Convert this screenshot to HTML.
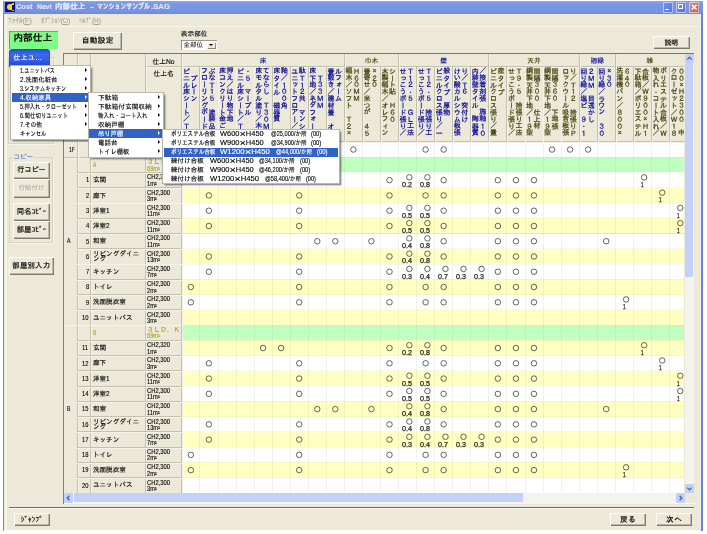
<!DOCTYPE html>
<html lang="ja">
<head>
<meta charset="utf-8">
<title>Cost Navi 内部仕上 - マンションサンプル.SAG</title>
<style>
html,body{margin:0;padding:0;background:#fff;}
body{width:707px;height:534px;overflow:hidden;position:relative;font-family:"Liberation Sans", "IPAGothic", sans-serif;}
#win{position:absolute;left:0;top:0;width:707px;height:534px;overflow:hidden;will-change:transform;}
#win div{position:absolute;box-sizing:border-box;}
.t{white-space:nowrap;-webkit-text-stroke:0.12px currentColor;}
.bl{left:0;top:0;width:100%;text-align:center;white-space:nowrap;-webkit-text-stroke:0.18px currentColor;}
.mi{white-space:nowrap;line-height:8px;}
.mi .p{font-size:6.0px;letter-spacing:-0.1px;}
.vt{-webkit-text-stroke:0.2px currentColor;writing-mode:vertical-lr;text-orientation:upright;font-size:7.0px;line-height:7.5px;letter-spacing:-0.14px;white-space:nowrap;overflow:hidden;font-family:"Liberation Sans","IPAGothic",sans-serif;}
.o{border:0.72px solid #45453f;border-radius:50%;}
.v{width:18px;text-align:center;font-size:5.6px;font-weight:bold;line-height:6px;color:#333;letter-spacing:0.1px;white-space:nowrap;}
.x{font-size:1.45em;line-height:0;position:relative;top:0.06em;}
.m{font-family:"Liberation Mono","IPAGothic",monospace;}
</style>
</head>
<body>
<div id="win">
<div style="left:3.00px;top:0.80px;width:699.90px;height:13.50px;background:linear-gradient(180deg,#8aa5ea 0%,#7a96e2 25%,#7892e0 80%,#6f88d8 100%);"></div>
<div style="left:5.20px;top:2.40px;width:9.40px;height:9.60px;background:#10108c;"></div>
<div style="left:7.00px;top:4.20px;width:4.60px;height:5.60px;background:#f0e020;border-radius:3px 0 0 3px;"></div>
<div style="left:12.00px;top:3.00px;width:2.00px;height:2.00px;background:#d8c820;"></div>
<div style="left:11.60px;top:9.60px;width:2.20px;height:1.80px;background:#d8c820;"></div>
<div style="left:0;top:0;width:0;height:0"><div class="t" style="left:16.40px;top:3.40px;font-size:7.6px;font-weight:bold;color:#dfe7fc;line-height:8px;transform:scaleX(0.9770);transform-origin:0 0;">Cost</div> <div class="t" style="left:37.40px;top:3.40px;font-size:7.6px;font-weight:bold;color:#dfe7fc;line-height:8px;transform:scaleX(0.9095);transform-origin:0 0;">Navi</div> <div class="t" style="left:55.20px;top:3.40px;font-size:7.6px;font-weight:bold;color:#dfe7fc;line-height:8px;transform:scaleX(1.0033);transform-origin:0 0;">内部仕上</div> <div class="t" style="left:89.60px;top:3.40px;font-size:7.6px;font-weight:bold;color:#dfe7fc;line-height:8px;transform:scaleX(1.5015);transform-origin:0 0;">-</div> <div class="t" style="left:97.00px;top:3.40px;font-size:7.6px;font-weight:bold;color:#dfe7fc;line-height:8px;transform:scaleX(0.7719);transform-origin:0 0;">マンションサンプル</div><div class="t" style="left:151.20px;top:3.40px;font-size:7.6px;font-weight:bold;color:#dfe7fc;line-height:8px;transform:scaleX(1.0226);transform-origin:0 0;">.SAG</div></div>
<div style="left:663.00px;top:2.20px;width:10.40px;height:10.40px;background:linear-gradient(135deg,#7896f0,#4f70dc);border-radius:1.5px;box-shadow:inset 0 0 0 0.7px rgba(255,255,255,.75);"><div style="left:2.4px;top:6.6px;width:3.6px;height:1.6px;background:#fff"></div></div>
<div style="left:676.00px;top:2.20px;width:10.40px;height:10.40px;background:linear-gradient(135deg,#7896f0,#4f70dc);border-radius:1.5px;box-shadow:inset 0 0 0 0.7px rgba(255,255,255,.75);"><div style="left:2.3px;top:2.3px;width:4.4px;height:4.4px;border:0.8px solid #fff;border-top-width:1.6px"></div></div>
<div style="left:688.60px;top:2.20px;width:10.40px;height:10.40px;background:linear-gradient(135deg,#cc8e8c,#b86062);border-radius:1.5px;box-shadow:inset 0 0 0 0.7px rgba(255,255,255,.75);"><svg style="position:absolute;left:0;top:0" width="10.4" height="10.4" viewBox="0 0 10.4 10.4"><path d="M2.8 2.8 L7.6 7.6 M7.6 2.8 L2.8 7.6" stroke="#fff" stroke-width="1.5" fill="none"/></svg></div>
<div style="left:3.00px;top:14.00px;width:1.40px;height:516.50px;background:#6f86e4;"></div>
<div style="left:701.30px;top:14.00px;width:1.60px;height:516.50px;background:#6880e6;"></div>
<div style="left:699.60px;top:14.00px;width:1.70px;height:516.50px;background:#f2f1e6;"></div>
<div style="left:4.40px;top:14.30px;width:695.20px;height:516.20px;background:#ece9d8;"></div>
<div style="left:4.60px;top:14.60px;width:2.40px;height:515.90px;background:#f4f3ea;"></div>
<div style="left:4.60px;top:25.90px;width:694.80px;height:0.80px;background:#f6f5ec;"></div>
<div class="t" style="left:7.80px;top:16.80px;font-size:7.0px;color:#a9a594;line-height:8px;transform:scaleX(1.0376);transform-origin:0 0;">ﾌｧｲﾙ(<u>F</u>)</div>
<div class="t" style="left:40.50px;top:16.80px;font-size:7.0px;color:#a9a594;line-height:8px;transform:scaleX(0.9419);transform-origin:0 0;">ｵﾌﾟｼｮﾝ(<u>O</u>)</div>
<div class="t" style="left:78.70px;top:16.80px;font-size:7.0px;color:#a9a594;line-height:8px;transform:scaleX(0.9234);transform-origin:0 0;">ﾍﾙﾌﾟ(<u>H</u>)</div>
<div style="left:9.20px;top:31.20px;width:49.20px;height:17.40px;background:#7cfc82;box-shadow:inset 0.8px 0.8px 0 #6f8a5c;"><div style="left:4.2px;top:0.6px;font-size:9.7px;font-weight:bold;line-height:11px;color:#000;white-space:nowrap">内部仕上</div></div>
<div style="left:73.00px;top:31.60px;width:49.40px;height:18.00px;background:#ece9d8;box-shadow:inset 0.9px 0.9px 0 #fffffa,inset -0.9px -0.9px 0 #7c7a6c,inset -1.7px -1.7px 0 #aca899;"><div class="bl" style="font-size:7.7px;color:#000;letter-spacing:0.3px;line-height:18.00px;">自動設定</div></div>
<div style="left:653.00px;top:35.60px;width:36.60px;height:13.60px;background:#ece9d8;box-shadow:inset 0.9px 0.9px 0 #fffffa,inset -0.9px -0.9px 0 #7c7a6c,inset -1.7px -1.7px 0 #aca899;"><div class="bl" style="font-size:6.8px;color:#000;letter-spacing:0.0px;line-height:13.60px;">説明</div></div>
<div class="t" style="left:180.80px;top:29.90px;font-size:6.7px;line-height:8px;color:#000;">表示部位</div>
<div style="left:180.80px;top:40.40px;width:35.80px;height:9.90px;background:#fff;box-shadow:inset 0.8px 0.8px 0 #7c7a6c,inset -0.7px -0.7px 0 #f8f7f0;"><div style="left:2.6px;top:1.0px;font-size:6.6px;line-height:8px;white-space:nowrap">全部位</div><div style="left:26.4px;top:1.2px;width:8.4px;height:7.6px;background:#ece9d8;box-shadow:inset 0.7px 0.7px 0 #fff,inset -0.7px -0.7px 0 #6c6a5c"><div style="left:2.2px;top:2.8px;width:0;height:0;border-left:2px solid transparent;border-right:2px solid transparent;border-top:2.4px solid #000"></div></div></div>
<div style="left:8.40px;top:56.50px;width:46.00px;height:87.00px;box-shadow:inset 0 0 0 0.8px #cfccba, 0.8px 0.8px 0 #faf9f2;"></div>
<div style="left:8.60px;top:48.60px;width:41.20px;height:18.60px;background:linear-gradient(180deg,#2650da 0%,#3a68f0 30%,#3560e8 60%,#2040c8 100%);border-radius:4px 4px 0 0;box-shadow:inset 0 0 0 0.6px #2846c0;"><div style="left:5.0px;top:5.8px;font-size:6.9px;font-weight:bold;color:#fff;line-height:8px;white-space:nowrap;letter-spacing:0.35px;text-shadow:0.4px 0.4px 0 #1a2f90">仕上ユ…</div></div>
<div style="left:8.80px;top:157.20px;width:44.60px;height:85.40px;box-shadow:inset 0 0 0 0.8px #cfccba, 0.8px 0.8px 0 #fbfaf4;border-radius:1.5px;"></div>
<div style="left:12.20px;top:153.40px;width:21.60px;height:8.00px;background:#ece9d8;"><div style="left:1.0px;top:0px;font-size:6.7px;line-height:8px;color:#2a55d8;white-space:nowrap">コピー</div></div>
<div style="left:12.80px;top:162.20px;width:37.40px;height:17.00px;background:#ece9d8;box-shadow:inset 0.9px 0.9px 0 #fffffa,inset -0.9px -0.9px 0 #7c7a6c,inset -1.7px -1.7px 0 #aca899;"><div class="bl" style="font-size:7.1px;color:#000;letter-spacing:0.0px;line-height:17.00px;">行コピー</div></div>
<div style="left:12.80px;top:179.20px;width:37.40px;height:18.60px;background:#ece9d8;box-shadow:inset 0.9px 0.9px 0 #fffffa,inset -0.9px -0.9px 0 #7c7a6c,inset -1.7px -1.7px 0 #aca899;"><div class="bl" style="font-size:6.4px;color:#b4b1a0;letter-spacing:0.0px;line-height:18.60px;text-shadow:0.6px 0.6px 0 #fff;">行貼付け</div></div>
<div style="left:12.80px;top:203.20px;width:37.40px;height:17.80px;background:#ece9d8;box-shadow:inset 0.9px 0.9px 0 #fffffa,inset -0.9px -0.9px 0 #7c7a6c,inset -1.7px -1.7px 0 #aca899;"><div class="bl" style="font-size:7.4px;color:#000;letter-spacing:0.0px;line-height:17.80px;">同名ｺﾋﾟｰ</div></div>
<div style="left:12.80px;top:221.00px;width:37.40px;height:18.20px;background:#ece9d8;box-shadow:inset 0.9px 0.9px 0 #fffffa,inset -0.9px -0.9px 0 #7c7a6c,inset -1.7px -1.7px 0 #aca899;"><div class="bl" style="font-size:7.4px;color:#000;letter-spacing:0.0px;line-height:18.20px;">部屋ｺﾋﾟｰ</div></div>
<div style="left:8.80px;top:257.20px;width:45.00px;height:17.80px;background:#ece9d8;box-shadow:inset 0.9px 0.9px 0 #fffffa,inset -0.9px -0.9px 0 #7c7a6c,inset -1.7px -1.7px 0 #aca899;"><div class="bl" style="font-size:7.4px;color:#000;letter-spacing:0.2px;line-height:17.80px;">部屋別入力</div></div>
<div style="left:8.60px;top:507.20px;width:685.20px;height:1.20px;background:#6e6c5e;"></div>
<div style="left:8.60px;top:508.40px;width:685.20px;height:0.80px;background:#fbfaf4;"></div>
<div style="left:13.60px;top:512.80px;width:36.40px;height:13.40px;background:#ece9d8;box-shadow:inset 0.9px 0.9px 0 #fffffa,inset -0.9px -0.9px 0 #7c7a6c,inset -1.7px -1.7px 0 #aca899;"><div class="bl" style="font-size:7.4px;color:#000;letter-spacing:0.0px;line-height:13.40px;">ｼﾞｬﾝﾌﾟ</div></div>
<div style="left:610.20px;top:512.80px;width:36.00px;height:13.40px;background:#ece9d8;box-shadow:inset 0.9px 0.9px 0 #fffffa,inset -0.9px -0.9px 0 #7c7a6c,inset -1.7px -1.7px 0 #aca899;"><div class="bl" style="font-size:7.6px;color:#000;letter-spacing:0.6px;line-height:13.40px;">戻る</div></div>
<div style="left:656.20px;top:512.80px;width:36.00px;height:13.40px;background:#ece9d8;box-shadow:inset 0.9px 0.9px 0 #fffffa,inset -0.9px -0.9px 0 #7c7a6c,inset -1.7px -1.7px 0 #aca899;"><div class="bl" style="font-size:7.6px;color:#000;letter-spacing:0.6px;line-height:13.40px;">次へ</div></div>
<div style="left:62.70px;top:53.20px;width:631.60px;height:450.60px;background:#ece9d8;box-shadow:inset 0.9px 0.9px 0 #77756a,inset -0.8px -0.8px 0 #fbfaf4;"></div>
<div style="left:181.80px;top:141.70px;width:502.70px;height:15.50px;background:#fff;"></div>
<div style="left:181.80px;top:157.20px;width:502.70px;height:15.26px;background:#c0ffc0;"></div>
<div style="left:181.80px;top:172.46px;width:502.70px;height:15.26px;background:#fff;"></div>
<div style="left:181.80px;top:187.72px;width:502.70px;height:15.26px;background:#ffffc2;"></div>
<div style="left:181.80px;top:202.98px;width:502.70px;height:15.26px;background:#fff;"></div>
<div style="left:181.80px;top:218.24px;width:502.70px;height:15.26px;background:#ffffc2;"></div>
<div style="left:181.80px;top:233.50px;width:502.70px;height:15.26px;background:#fff;"></div>
<div style="left:181.80px;top:248.76px;width:502.70px;height:15.26px;background:#ffffc2;"></div>
<div style="left:181.80px;top:264.02px;width:502.70px;height:15.26px;background:#fff;"></div>
<div style="left:181.80px;top:279.28px;width:502.70px;height:15.26px;background:#ffffc2;"></div>
<div style="left:181.80px;top:294.54px;width:502.70px;height:15.26px;background:#fff;"></div>
<div style="left:181.80px;top:309.80px;width:502.70px;height:15.26px;background:#ffffc2;"></div>
<div style="left:181.80px;top:325.06px;width:502.70px;height:15.26px;background:#c0ffc0;"></div>
<div style="left:181.80px;top:340.32px;width:502.70px;height:15.26px;background:#ffffc2;"></div>
<div style="left:181.80px;top:355.58px;width:502.70px;height:15.26px;background:#fff;"></div>
<div style="left:181.80px;top:370.84px;width:502.70px;height:15.26px;background:#ffffc2;"></div>
<div style="left:181.80px;top:386.10px;width:502.70px;height:15.26px;background:#fff;"></div>
<div style="left:181.80px;top:401.36px;width:502.70px;height:15.26px;background:#ffffc2;"></div>
<div style="left:181.80px;top:416.62px;width:502.70px;height:15.26px;background:#fff;"></div>
<div style="left:181.80px;top:431.88px;width:502.70px;height:15.26px;background:#ffffc2;"></div>
<div style="left:181.80px;top:447.14px;width:502.70px;height:15.26px;background:#fff;"></div>
<div style="left:181.80px;top:462.40px;width:502.70px;height:15.26px;background:#ffffc2;"></div>
<div style="left:181.80px;top:477.66px;width:502.70px;height:15.26px;background:#fff;"></div>
<div style="left:199.46px;top:141.70px;width:0.80px;height:351.10px;background:rgba(150,150,120,.12);"></div>
<div style="left:217.52px;top:141.70px;width:0.80px;height:351.10px;background:rgba(150,150,120,.12);"></div>
<div style="left:235.58px;top:141.70px;width:0.80px;height:351.10px;background:rgba(150,150,120,.12);"></div>
<div style="left:253.64px;top:141.70px;width:0.80px;height:351.10px;background:rgba(150,150,120,.12);"></div>
<div style="left:271.70px;top:141.70px;width:0.80px;height:351.10px;background:rgba(150,150,120,.12);"></div>
<div style="left:289.76px;top:141.70px;width:0.80px;height:351.10px;background:rgba(150,150,120,.12);"></div>
<div style="left:307.82px;top:141.70px;width:0.80px;height:351.10px;background:rgba(150,150,120,.12);"></div>
<div style="left:325.88px;top:141.70px;width:0.80px;height:351.10px;background:rgba(150,150,120,.12);"></div>
<div style="left:343.94px;top:141.70px;width:0.80px;height:351.10px;background:rgba(150,150,120,.12);"></div>
<div style="left:362.00px;top:141.70px;width:0.80px;height:351.10px;background:rgba(150,150,120,.12);"></div>
<div style="left:380.06px;top:141.70px;width:0.80px;height:351.10px;background:rgba(150,150,120,.12);"></div>
<div style="left:398.12px;top:141.70px;width:0.80px;height:351.10px;background:rgba(150,150,120,.12);"></div>
<div style="left:416.18px;top:141.70px;width:0.80px;height:351.10px;background:rgba(150,150,120,.12);"></div>
<div style="left:434.24px;top:141.70px;width:0.80px;height:351.10px;background:rgba(150,150,120,.12);"></div>
<div style="left:452.30px;top:141.70px;width:0.80px;height:351.10px;background:rgba(150,150,120,.12);"></div>
<div style="left:470.36px;top:141.70px;width:0.80px;height:351.10px;background:rgba(150,150,120,.12);"></div>
<div style="left:488.42px;top:141.70px;width:0.80px;height:351.10px;background:rgba(150,150,120,.12);"></div>
<div style="left:506.48px;top:141.70px;width:0.80px;height:351.10px;background:rgba(150,150,120,.12);"></div>
<div style="left:524.54px;top:141.70px;width:0.80px;height:351.10px;background:rgba(150,150,120,.12);"></div>
<div style="left:542.60px;top:141.70px;width:0.80px;height:351.10px;background:rgba(150,150,120,.12);"></div>
<div style="left:560.66px;top:141.70px;width:0.80px;height:351.10px;background:rgba(150,150,120,.12);"></div>
<div style="left:578.72px;top:141.70px;width:0.80px;height:351.10px;background:rgba(150,150,120,.12);"></div>
<div style="left:596.78px;top:141.70px;width:0.80px;height:351.10px;background:rgba(150,150,120,.12);"></div>
<div style="left:614.84px;top:141.70px;width:0.80px;height:351.10px;background:rgba(150,150,120,.12);"></div>
<div style="left:632.90px;top:141.70px;width:0.80px;height:351.10px;background:rgba(150,150,120,.12);"></div>
<div style="left:650.96px;top:141.70px;width:0.80px;height:351.10px;background:rgba(150,150,120,.12);"></div>
<div style="left:669.02px;top:141.70px;width:0.80px;height:351.10px;background:rgba(150,150,120,.12);"></div>
<div style="left:181.80px;top:156.80px;width:502.70px;height:0.80px;background:rgba(150,150,120,.08);"></div>
<div style="left:181.80px;top:172.06px;width:502.70px;height:0.80px;background:rgba(150,150,120,.08);"></div>
<div style="left:181.80px;top:187.32px;width:502.70px;height:0.80px;background:rgba(150,150,120,.08);"></div>
<div style="left:181.80px;top:202.58px;width:502.70px;height:0.80px;background:rgba(150,150,120,.08);"></div>
<div style="left:181.80px;top:217.84px;width:502.70px;height:0.80px;background:rgba(150,150,120,.08);"></div>
<div style="left:181.80px;top:233.10px;width:502.70px;height:0.80px;background:rgba(150,150,120,.08);"></div>
<div style="left:181.80px;top:248.36px;width:502.70px;height:0.80px;background:rgba(150,150,120,.08);"></div>
<div style="left:181.80px;top:263.62px;width:502.70px;height:0.80px;background:rgba(150,150,120,.08);"></div>
<div style="left:181.80px;top:278.88px;width:502.70px;height:0.80px;background:rgba(150,150,120,.08);"></div>
<div style="left:181.80px;top:294.14px;width:502.70px;height:0.80px;background:rgba(150,150,120,.08);"></div>
<div style="left:181.80px;top:309.40px;width:502.70px;height:0.80px;background:rgba(150,150,120,.08);"></div>
<div style="left:181.80px;top:324.66px;width:502.70px;height:0.80px;background:rgba(150,150,120,.08);"></div>
<div style="left:181.80px;top:339.92px;width:502.70px;height:0.80px;background:rgba(150,150,120,.08);"></div>
<div style="left:181.80px;top:355.18px;width:502.70px;height:0.80px;background:rgba(150,150,120,.08);"></div>
<div style="left:181.80px;top:370.44px;width:502.70px;height:0.80px;background:rgba(150,150,120,.08);"></div>
<div style="left:181.80px;top:385.70px;width:502.70px;height:0.80px;background:rgba(150,150,120,.08);"></div>
<div style="left:181.80px;top:400.96px;width:502.70px;height:0.80px;background:rgba(150,150,120,.08);"></div>
<div style="left:181.80px;top:416.22px;width:502.70px;height:0.80px;background:rgba(150,150,120,.08);"></div>
<div style="left:181.80px;top:431.48px;width:502.70px;height:0.80px;background:rgba(150,150,120,.08);"></div>
<div style="left:181.80px;top:446.74px;width:502.70px;height:0.80px;background:rgba(150,150,120,.08);"></div>
<div style="left:181.80px;top:462.00px;width:502.70px;height:0.80px;background:rgba(150,150,120,.08);"></div>
<div style="left:181.80px;top:477.26px;width:502.70px;height:0.80px;background:rgba(150,150,120,.08);"></div>
<div style="left:145.30px;top:66.10px;width:539.20px;height:0.80px;background:#c3c0ae;"></div>
<div style="left:145.30px;top:66.90px;width:539.20px;height:0.60px;background:#f5f3e9;"></div>
<div style="left:63.50px;top:141.30px;width:621.00px;height:0.80px;background:#c3c0ae;"></div>
<div style="left:63.50px;top:142.10px;width:621.00px;height:0.60px;background:#f5f3e9;"></div>
<div style="left:76.90px;top:54.00px;width:0.80px;height:87.70px;background:#c3c0ae;"></div>
<div style="left:77.70px;top:54.00px;width:0.60px;height:87.70px;background:#f5f3e9;"></div>
<div style="left:90.10px;top:54.00px;width:0.80px;height:87.70px;background:#c3c0ae;"></div>
<div style="left:90.90px;top:54.00px;width:0.60px;height:87.70px;background:#f5f3e9;"></div>
<div style="left:144.90px;top:54.00px;width:0.80px;height:87.70px;background:#c3c0ae;"></div>
<div style="left:145.70px;top:54.00px;width:0.60px;height:87.70px;background:#f5f3e9;"></div>
<div style="left:181.40px;top:54.00px;width:0.80px;height:438.80px;background:#c3c0ae;"></div>
<div style="left:182.20px;top:54.00px;width:0.60px;height:438.80px;background:#f5f3e9;"></div>
<div class="t" style="left:181.80px;top:56.60px;width:162.54px;text-align:center;font-size:6.7px;line-height:8px;color:#000096;">床</div>
<div style="left:343.94px;top:54.00px;width:0.80px;height:87.70px;background:#c3c0ae;"></div>
<div style="left:344.74px;top:54.00px;width:0.60px;height:87.70px;background:#f5f3e9;"></div>
<div class="t" style="left:344.34px;top:56.60px;width:54.18px;text-align:center;font-size:6.7px;line-height:8px;color:#3e3e08;">巾木</div>
<div style="left:398.12px;top:54.00px;width:0.80px;height:87.70px;background:#c3c0ae;"></div>
<div style="left:398.92px;top:54.00px;width:0.60px;height:87.70px;background:#f5f3e9;"></div>
<div class="t" style="left:398.52px;top:56.60px;width:90.30px;text-align:center;font-size:6.7px;line-height:8px;color:#000096;">壁</div>
<div style="left:488.42px;top:54.00px;width:0.80px;height:87.70px;background:#c3c0ae;"></div>
<div style="left:489.22px;top:54.00px;width:0.60px;height:87.70px;background:#f5f3e9;"></div>
<div class="t" style="left:488.82px;top:56.60px;width:90.30px;text-align:center;font-size:6.7px;line-height:8px;color:#3e3e08;">天井</div>
<div style="left:578.72px;top:54.00px;width:0.80px;height:87.70px;background:#c3c0ae;"></div>
<div style="left:579.52px;top:54.00px;width:0.60px;height:87.70px;background:#f5f3e9;"></div>
<div class="t" style="left:579.12px;top:56.60px;width:36.12px;text-align:center;font-size:6.7px;line-height:8px;color:#000096;">廻縁</div>
<div style="left:614.84px;top:54.00px;width:0.80px;height:87.70px;background:#c3c0ae;"></div>
<div style="left:615.64px;top:54.00px;width:0.60px;height:87.70px;background:#f5f3e9;"></div>
<div class="t" style="left:615.24px;top:56.60px;width:69.26px;text-align:center;font-size:6.7px;line-height:8px;color:#3e3e08;">雑</div>
<div style="left:199.46px;top:66.50px;width:0.80px;height:75.20px;background:#c3c0ae;"></div>
<div style="left:200.26px;top:66.50px;width:0.60px;height:75.20px;background:#f5f3e9;"></div>
<div style="left:217.52px;top:66.50px;width:0.80px;height:75.20px;background:#c3c0ae;"></div>
<div style="left:218.32px;top:66.50px;width:0.60px;height:75.20px;background:#f5f3e9;"></div>
<div style="left:235.58px;top:66.50px;width:0.80px;height:75.20px;background:#c3c0ae;"></div>
<div style="left:236.38px;top:66.50px;width:0.60px;height:75.20px;background:#f5f3e9;"></div>
<div style="left:253.64px;top:66.50px;width:0.80px;height:75.20px;background:#c3c0ae;"></div>
<div style="left:254.44px;top:66.50px;width:0.60px;height:75.20px;background:#f5f3e9;"></div>
<div style="left:271.70px;top:66.50px;width:0.80px;height:75.20px;background:#c3c0ae;"></div>
<div style="left:272.50px;top:66.50px;width:0.60px;height:75.20px;background:#f5f3e9;"></div>
<div style="left:289.76px;top:66.50px;width:0.80px;height:75.20px;background:#c3c0ae;"></div>
<div style="left:290.56px;top:66.50px;width:0.60px;height:75.20px;background:#f5f3e9;"></div>
<div style="left:307.82px;top:66.50px;width:0.80px;height:75.20px;background:#c3c0ae;"></div>
<div style="left:308.62px;top:66.50px;width:0.60px;height:75.20px;background:#f5f3e9;"></div>
<div style="left:325.88px;top:66.50px;width:0.80px;height:75.20px;background:#c3c0ae;"></div>
<div style="left:326.68px;top:66.50px;width:0.60px;height:75.20px;background:#f5f3e9;"></div>
<div style="left:362.00px;top:66.50px;width:0.80px;height:75.20px;background:#c3c0ae;"></div>
<div style="left:362.80px;top:66.50px;width:0.60px;height:75.20px;background:#f5f3e9;"></div>
<div style="left:380.06px;top:66.50px;width:0.80px;height:75.20px;background:#c3c0ae;"></div>
<div style="left:380.86px;top:66.50px;width:0.60px;height:75.20px;background:#f5f3e9;"></div>
<div style="left:416.18px;top:66.50px;width:0.80px;height:75.20px;background:#c3c0ae;"></div>
<div style="left:416.98px;top:66.50px;width:0.60px;height:75.20px;background:#f5f3e9;"></div>
<div style="left:434.24px;top:66.50px;width:0.80px;height:75.20px;background:#c3c0ae;"></div>
<div style="left:435.04px;top:66.50px;width:0.60px;height:75.20px;background:#f5f3e9;"></div>
<div style="left:452.30px;top:66.50px;width:0.80px;height:75.20px;background:#c3c0ae;"></div>
<div style="left:453.10px;top:66.50px;width:0.60px;height:75.20px;background:#f5f3e9;"></div>
<div style="left:470.36px;top:66.50px;width:0.80px;height:75.20px;background:#c3c0ae;"></div>
<div style="left:471.16px;top:66.50px;width:0.60px;height:75.20px;background:#f5f3e9;"></div>
<div style="left:506.48px;top:66.50px;width:0.80px;height:75.20px;background:#c3c0ae;"></div>
<div style="left:507.28px;top:66.50px;width:0.60px;height:75.20px;background:#f5f3e9;"></div>
<div style="left:524.54px;top:66.50px;width:0.80px;height:75.20px;background:#c3c0ae;"></div>
<div style="left:525.34px;top:66.50px;width:0.60px;height:75.20px;background:#f5f3e9;"></div>
<div style="left:542.60px;top:66.50px;width:0.80px;height:75.20px;background:#c3c0ae;"></div>
<div style="left:543.40px;top:66.50px;width:0.60px;height:75.20px;background:#f5f3e9;"></div>
<div style="left:560.66px;top:66.50px;width:0.80px;height:75.20px;background:#c3c0ae;"></div>
<div style="left:561.46px;top:66.50px;width:0.60px;height:75.20px;background:#f5f3e9;"></div>
<div style="left:596.78px;top:66.50px;width:0.80px;height:75.20px;background:#c3c0ae;"></div>
<div style="left:597.58px;top:66.50px;width:0.60px;height:75.20px;background:#f5f3e9;"></div>
<div style="left:632.90px;top:66.50px;width:0.80px;height:75.20px;background:#c3c0ae;"></div>
<div style="left:633.70px;top:66.50px;width:0.60px;height:75.20px;background:#f5f3e9;"></div>
<div style="left:650.96px;top:66.50px;width:0.80px;height:75.20px;background:#c3c0ae;"></div>
<div style="left:651.76px;top:66.50px;width:0.60px;height:75.20px;background:#f5f3e9;"></div>
<div style="left:669.02px;top:66.50px;width:0.80px;height:75.20px;background:#c3c0ae;"></div>
<div style="left:669.82px;top:66.50px;width:0.60px;height:75.20px;background:#f5f3e9;"></div>
<div class="t" style="left:145.30px;top:57.60px;width:36.50px;text-align:center;font-size:6.7px;line-height:8px;">仕上No</div>
<div class="t" style="left:145.30px;top:69.90px;width:36.50px;text-align:center;font-size:6.7px;line-height:8px;">仕上名</div>
<div class="vt" style="left:182.40px;top:66.90px;width:17.46px;height:74.60px;color:#000096">ビニル床シート／Ｔ２<br>　プレーン</div>
<div class="vt" style="left:200.46px;top:66.90px;width:17.46px;height:74.60px;color:#000096">フローリングボード／<br>ぶなＴ１５　塗装品</div>
<div class="vt" style="left:218.52px;top:66.90px;width:17.46px;height:74.60px;color:#000096">床コンクリート金ごて<br>押え／はり物下地</div>
<div class="vt" style="left:236.58px;top:66.90px;width:17.46px;height:74.60px;color:#000096">ビニル床シート／Ｔ２<br>・５　マーブル</div>
<div class="vt" style="left:254.64px;top:66.90px;width:17.46px;height:74.60px;color:#000096">床モルタル塗り／木ご<br>てならし　Ｔ３０Ｍ</div>
<div class="vt" style="left:272.70px;top:66.90px;width:17.46px;height:74.60px;color:#000096">床タイル　磁器質　施<br>釉／１００角</div>
<div class="vt" style="left:290.76px;top:66.90px;width:17.46px;height:74.60px;color:#000096">ユニットフロアー／下<br>駄Ｔ１２共　マンシ</div>
<div class="vt" style="left:308.82px;top:66.90px;width:17.46px;height:74.60px;color:#000096">床下地／ネダフォーム<br>　Ｔ３３ＭＭ</div>
<div class="vt" style="left:326.88px;top:66.90px;width:17.46px;height:74.60px;color:#000096">畳敷き／建材畳　オー<br>ルフォーム</div>
<div class="vt" style="left:344.94px;top:66.90px;width:17.46px;height:74.60px;color:#3e3e08">幅木／ソフト　Ｔ２×<br>Ｈ６０ＭＭ</div>
<div class="vt" style="left:363.00px;top:66.90px;width:17.46px;height:74.60px;color:#3e3e08">畳寄せ／米つが　４５<br>×２０</div>
<div class="vt" style="left:381.06px;top:66.90px;width:17.46px;height:74.60px;color:#3e3e08">木製幅木／オレフィン<br>シート貼　Ｈ６０</div>
<div class="vt" style="left:399.12px;top:66.90px;width:17.46px;height:74.60px;color:#000096">せっこうボード張り／<br>Ｔ１２・５　ＧＬ工法</div>
<div class="vt" style="left:417.18px;top:66.90px;width:17.46px;height:74.60px;color:#000096">せっこうボード張り／<br>Ｔ１２・５　捨張り工</div>
<div class="vt" style="left:435.24px;top:66.90px;width:17.46px;height:74.60px;color:#000096">ビニルクロス張り／一<br>般タイプ　厚物</div>
<div class="vt" style="left:453.30px;top:66.90px;width:17.46px;height:74.60px;color:#000096">けい酸カルシウム板張<br>り／Ｔ６　突付け</div>
<div class="vt" style="left:471.36px;top:66.90px;width:17.46px;height:74.60px;color:#000096">内装壁タイル　陶器質<br>／接着剤張　施釉１０</div>
<div class="vt" style="left:489.42px;top:66.90px;width:17.46px;height:74.60px;color:#3e3e08">ビニルクロス張り／量<br>産タイプ</div>
<div class="vt" style="left:507.48px;top:66.90px;width:17.46px;height:74.60px;color:#3e3e08">せっこうボード張り／<br>Ｔ９・５　捨張り工法</div>
<div class="vt" style="left:525.54px;top:66.90px;width:17.46px;height:74.60px;color:#3e3e08">鋼製天井下地／１９型<br>間隔３００　仕上材</div>
<div class="vt" style="left:543.60px;top:66.90px;width:17.46px;height:74.60px;color:#3e3e08">鋼製天井下地／１９型<br>間隔３６０　下地張</div>
<div class="vt" style="left:561.66px;top:66.90px;width:17.46px;height:74.60px;color:#3e3e08">ロックウール吸音板張<br>り／Ｔ１２　捨張りＰ</div>
<div class="vt" style="left:579.72px;top:66.90px;width:17.46px;height:74.60px;color:#000096">回り縁／塩ビ　９・１<br>２ＭＭ　目透かし</div>
<div class="vt" style="left:597.78px;top:66.90px;width:17.46px;height:74.60px;color:#000096">回り縁／ラワン　３０<br>×３０</div>
<div class="vt" style="left:615.84px;top:66.90px;width:17.46px;height:74.60px;color:#3e3e08">洗濯機パン／８００×<br>６４０</div>
<div class="vt" style="left:633.90px;top:66.90px;width:17.46px;height:74.60px;color:#3e3e08">下駄箱／ポリエステル<br>合板／Ｗ９００×Ｈ１</div>
<div class="vt" style="left:651.96px;top:66.90px;width:17.46px;height:74.60px;color:#3e3e08">物入れ・コート入れ／<br>ポリエステル合板／Ｗ</div>
<div class="vt" style="left:670.02px;top:66.90px;width:14.48px;height:74.60px;color:#3e3e08">クローゼット／Ｗ１８<br>００×Ｈ２３００　中</div>
<div style="left:63.50px;top:156.80px;width:118.30px;height:0.80px;background:#c3c0ae;"></div>
<div style="left:63.50px;top:157.60px;width:118.30px;height:0.60px;background:#f5f3e9;"></div>
<div style="left:76.90px;top:141.70px;width:0.80px;height:351.10px;background:#c3c0ae;"></div>
<div style="left:77.70px;top:141.70px;width:0.60px;height:351.10px;background:#f5f3e9;"></div>
<div style="left:90.10px;top:157.20px;width:0.80px;height:335.60px;background:#c3c0ae;"></div>
<div style="left:90.90px;top:157.20px;width:0.60px;height:335.60px;background:#f5f3e9;"></div>
<div style="left:144.90px;top:141.70px;width:0.80px;height:351.10px;background:#c3c0ae;"></div>
<div style="left:145.70px;top:141.70px;width:0.60px;height:351.10px;background:#f5f3e9;"></div>
<div style="left:77.30px;top:172.06px;width:104.50px;height:0.80px;background:#c3c0ae;"></div>
<div style="left:77.30px;top:172.86px;width:104.50px;height:0.60px;background:#f5f3e9;"></div>
<div style="left:77.30px;top:187.32px;width:104.50px;height:0.80px;background:#c3c0ae;"></div>
<div style="left:77.30px;top:188.12px;width:104.50px;height:0.60px;background:#f5f3e9;"></div>
<div style="left:77.30px;top:202.58px;width:104.50px;height:0.80px;background:#c3c0ae;"></div>
<div style="left:77.30px;top:203.38px;width:104.50px;height:0.60px;background:#f5f3e9;"></div>
<div style="left:77.30px;top:217.84px;width:104.50px;height:0.80px;background:#c3c0ae;"></div>
<div style="left:77.30px;top:218.64px;width:104.50px;height:0.60px;background:#f5f3e9;"></div>
<div style="left:77.30px;top:233.10px;width:104.50px;height:0.80px;background:#c3c0ae;"></div>
<div style="left:77.30px;top:233.90px;width:104.50px;height:0.60px;background:#f5f3e9;"></div>
<div style="left:77.30px;top:248.36px;width:104.50px;height:0.80px;background:#c3c0ae;"></div>
<div style="left:77.30px;top:249.16px;width:104.50px;height:0.60px;background:#f5f3e9;"></div>
<div style="left:77.30px;top:263.62px;width:104.50px;height:0.80px;background:#c3c0ae;"></div>
<div style="left:77.30px;top:264.42px;width:104.50px;height:0.60px;background:#f5f3e9;"></div>
<div style="left:77.30px;top:278.88px;width:104.50px;height:0.80px;background:#c3c0ae;"></div>
<div style="left:77.30px;top:279.68px;width:104.50px;height:0.60px;background:#f5f3e9;"></div>
<div style="left:77.30px;top:294.14px;width:104.50px;height:0.80px;background:#c3c0ae;"></div>
<div style="left:77.30px;top:294.94px;width:104.50px;height:0.60px;background:#f5f3e9;"></div>
<div style="left:77.30px;top:309.40px;width:104.50px;height:0.80px;background:#c3c0ae;"></div>
<div style="left:77.30px;top:310.20px;width:104.50px;height:0.60px;background:#f5f3e9;"></div>
<div style="left:63.50px;top:324.66px;width:118.30px;height:0.80px;background:#c3c0ae;"></div>
<div style="left:63.50px;top:325.46px;width:118.30px;height:0.60px;background:#f5f3e9;"></div>
<div style="left:77.30px;top:339.92px;width:104.50px;height:0.80px;background:#c3c0ae;"></div>
<div style="left:77.30px;top:340.72px;width:104.50px;height:0.60px;background:#f5f3e9;"></div>
<div style="left:77.30px;top:355.18px;width:104.50px;height:0.80px;background:#c3c0ae;"></div>
<div style="left:77.30px;top:355.98px;width:104.50px;height:0.60px;background:#f5f3e9;"></div>
<div style="left:77.30px;top:370.44px;width:104.50px;height:0.80px;background:#c3c0ae;"></div>
<div style="left:77.30px;top:371.24px;width:104.50px;height:0.60px;background:#f5f3e9;"></div>
<div style="left:77.30px;top:385.70px;width:104.50px;height:0.80px;background:#c3c0ae;"></div>
<div style="left:77.30px;top:386.50px;width:104.50px;height:0.60px;background:#f5f3e9;"></div>
<div style="left:77.30px;top:400.96px;width:104.50px;height:0.80px;background:#c3c0ae;"></div>
<div style="left:77.30px;top:401.76px;width:104.50px;height:0.60px;background:#f5f3e9;"></div>
<div style="left:77.30px;top:416.22px;width:104.50px;height:0.80px;background:#c3c0ae;"></div>
<div style="left:77.30px;top:417.02px;width:104.50px;height:0.60px;background:#f5f3e9;"></div>
<div style="left:77.30px;top:431.48px;width:104.50px;height:0.80px;background:#c3c0ae;"></div>
<div style="left:77.30px;top:432.28px;width:104.50px;height:0.60px;background:#f5f3e9;"></div>
<div style="left:77.30px;top:446.74px;width:104.50px;height:0.80px;background:#c3c0ae;"></div>
<div style="left:77.30px;top:447.54px;width:104.50px;height:0.60px;background:#f5f3e9;"></div>
<div style="left:77.30px;top:462.00px;width:104.50px;height:0.80px;background:#c3c0ae;"></div>
<div style="left:77.30px;top:462.80px;width:104.50px;height:0.60px;background:#f5f3e9;"></div>
<div style="left:77.30px;top:477.26px;width:104.50px;height:0.80px;background:#c3c0ae;"></div>
<div style="left:77.30px;top:478.06px;width:104.50px;height:0.60px;background:#f5f3e9;"></div>
<div style="left:63.50px;top:492.52px;width:118.30px;height:0.80px;background:#c3c0ae;"></div>
<div style="left:63.50px;top:493.32px;width:118.30px;height:0.60px;background:#f5f3e9;"></div>
<div class="t" style="left:68.90px;top:146.30px;font-size:6.62px;color:#000;line-height:8px;transform:scaleX(0.7766);transform-origin:0 0;">1F</div>
<div class="t" style="left:66.90px;top:237.40px;font-size:6.62px;color:#000;line-height:8px;transform:scaleX(0.7700);transform-origin:0 0;">A</div>
<div class="t" style="left:66.90px;top:405.26px;font-size:6.62px;color:#000;line-height:8px;transform:scaleX(0.7700);transform-origin:0 0;">B</div>
<div class="t" style="left:92.90px;top:161.00px;font-size:6.62px;color:#a8a418;line-height:8px;transform:scaleX(0.7496);transform-origin:0 0;">A</div>
<div class="t" style="left:147.10px;top:158.10px;font-size:6.62px;color:#a8a418;line-height:7px;transform:scaleX(1.0000);transform-origin:0 0;">３ＬＤ．Ｋ</div>
<div class="t" style="left:147.10px;top:164.50px;font-size:6.62px;color:#a8a418;line-height:7px;transform:scaleX(0.8633);transform-origin:0 0;">69m²</div>
<div class="t" style="left:92.90px;top:328.86px;font-size:6.62px;color:#a8a418;line-height:8px;transform:scaleX(0.7496);transform-origin:0 0;">B</div>
<div class="t" style="left:147.10px;top:325.96px;font-size:6.62px;color:#a8a418;line-height:7px;transform:scaleX(1.0000);transform-origin:0 0;">３ＬＤ．Ｋ</div>
<div class="t" style="left:147.10px;top:332.36px;font-size:6.62px;color:#a8a418;line-height:7px;transform:scaleX(0.8633);transform-origin:0 0;">69m²</div>
<div class="t" style="left:85.55px;top:176.46px;font-size:6.62px;color:#000;line-height:8px;transform:scaleX(0.8827);transform-origin:0 0;">1</div>
<div class="t" style="left:92.90px;top:176.26px;font-size:6.62px;color:#000;line-height:8px;transform:scaleX(1.0000);transform-origin:0 0;">玄関</div>
<div class="t" style="left:147.10px;top:173.36px;font-size:6.62px;color:#000;line-height:7px;transform:scaleX(0.8868);transform-origin:0 0;">CH2,300</div>
<div class="t" style="left:147.10px;top:179.76px;font-size:6.62px;color:#000;line-height:7px;transform:scaleX(0.8517);transform-origin:0 0;">1m²</div>
<div class="t" style="left:82.30px;top:344.32px;font-size:6.62px;color:#000;line-height:8px;transform:scaleX(0.8827);transform-origin:0 0;">11</div>
<div class="t" style="left:92.90px;top:344.12px;font-size:6.62px;color:#000;line-height:8px;transform:scaleX(1.0000);transform-origin:0 0;">玄関</div>
<div class="t" style="left:147.10px;top:341.22px;font-size:6.62px;color:#000;line-height:7px;transform:scaleX(0.8868);transform-origin:0 0;">CH2,320</div>
<div class="t" style="left:147.10px;top:347.62px;font-size:6.62px;color:#000;line-height:7px;transform:scaleX(0.8517);transform-origin:0 0;">1m²</div>
<div class="t" style="left:85.55px;top:191.72px;font-size:6.62px;color:#000;line-height:8px;transform:scaleX(0.8827);transform-origin:0 0;">2</div>
<div class="t" style="left:92.90px;top:191.52px;font-size:6.62px;color:#000;line-height:8px;transform:scaleX(1.0000);transform-origin:0 0;">廊下</div>
<div class="t" style="left:147.10px;top:188.62px;font-size:6.62px;color:#000;line-height:7px;transform:scaleX(0.8868);transform-origin:0 0;">CH2,300</div>
<div class="t" style="left:147.10px;top:195.02px;font-size:6.62px;color:#000;line-height:7px;transform:scaleX(0.8517);transform-origin:0 0;">3m²</div>
<div class="t" style="left:82.30px;top:359.58px;font-size:6.62px;color:#000;line-height:8px;transform:scaleX(0.8827);transform-origin:0 0;">12</div>
<div class="t" style="left:92.90px;top:359.38px;font-size:6.62px;color:#000;line-height:8px;transform:scaleX(1.0000);transform-origin:0 0;">廊下</div>
<div class="t" style="left:147.10px;top:356.48px;font-size:6.62px;color:#000;line-height:7px;transform:scaleX(0.8868);transform-origin:0 0;">CH2,300</div>
<div class="t" style="left:147.10px;top:362.88px;font-size:6.62px;color:#000;line-height:7px;transform:scaleX(0.8517);transform-origin:0 0;">3m²</div>
<div class="t" style="left:85.55px;top:206.98px;font-size:6.62px;color:#000;line-height:8px;transform:scaleX(0.8827);transform-origin:0 0;">3</div>
<div class="t" style="left:92.90px;top:206.78px;font-size:6.62px;color:#000;line-height:8px;transform:scaleX(0.9780);transform-origin:0 0;">洋室1</div>
<div class="t" style="left:147.10px;top:203.88px;font-size:6.62px;color:#000;line-height:7px;transform:scaleX(0.8868);transform-origin:0 0;">CH2,300</div>
<div class="t" style="left:147.10px;top:210.28px;font-size:6.62px;color:#000;line-height:7px;transform:scaleX(0.8633);transform-origin:0 0;">11m²</div>
<div class="t" style="left:82.30px;top:374.84px;font-size:6.62px;color:#000;line-height:8px;transform:scaleX(0.8827);transform-origin:0 0;">13</div>
<div class="t" style="left:92.90px;top:374.64px;font-size:6.62px;color:#000;line-height:8px;transform:scaleX(0.9780);transform-origin:0 0;">洋室1</div>
<div class="t" style="left:147.10px;top:371.74px;font-size:6.62px;color:#000;line-height:7px;transform:scaleX(0.8868);transform-origin:0 0;">CH2,300</div>
<div class="t" style="left:147.10px;top:378.14px;font-size:6.62px;color:#000;line-height:7px;transform:scaleX(0.8633);transform-origin:0 0;">11m²</div>
<div class="t" style="left:85.55px;top:222.24px;font-size:6.62px;color:#000;line-height:8px;transform:scaleX(0.8827);transform-origin:0 0;">4</div>
<div class="t" style="left:92.90px;top:222.04px;font-size:6.62px;color:#000;line-height:8px;transform:scaleX(0.9780);transform-origin:0 0;">洋室2</div>
<div class="t" style="left:147.10px;top:219.14px;font-size:6.62px;color:#000;line-height:7px;transform:scaleX(0.8868);transform-origin:0 0;">CH2,300</div>
<div class="t" style="left:147.10px;top:225.54px;font-size:6.62px;color:#000;line-height:7px;transform:scaleX(0.8633);transform-origin:0 0;">11m²</div>
<div class="t" style="left:82.30px;top:390.10px;font-size:6.62px;color:#000;line-height:8px;transform:scaleX(0.8827);transform-origin:0 0;">14</div>
<div class="t" style="left:92.90px;top:389.90px;font-size:6.62px;color:#000;line-height:8px;transform:scaleX(0.9780);transform-origin:0 0;">洋室2</div>
<div class="t" style="left:147.10px;top:387.00px;font-size:6.62px;color:#000;line-height:7px;transform:scaleX(0.8868);transform-origin:0 0;">CH2,300</div>
<div class="t" style="left:147.10px;top:393.40px;font-size:6.62px;color:#000;line-height:7px;transform:scaleX(0.8633);transform-origin:0 0;">11m²</div>
<div class="t" style="left:85.55px;top:237.50px;font-size:6.62px;color:#000;line-height:8px;transform:scaleX(0.8827);transform-origin:0 0;">5</div>
<div class="t" style="left:92.90px;top:237.30px;font-size:6.62px;color:#000;line-height:8px;transform:scaleX(1.0000);transform-origin:0 0;">和室</div>
<div class="t" style="left:147.10px;top:234.40px;font-size:6.62px;color:#000;line-height:7px;transform:scaleX(0.8868);transform-origin:0 0;">CH2,300</div>
<div class="t" style="left:147.10px;top:240.80px;font-size:6.62px;color:#000;line-height:7px;transform:scaleX(0.8633);transform-origin:0 0;">11m²</div>
<div class="t" style="left:82.30px;top:405.36px;font-size:6.62px;color:#000;line-height:8px;transform:scaleX(0.8827);transform-origin:0 0;">15</div>
<div class="t" style="left:92.90px;top:405.16px;font-size:6.62px;color:#000;line-height:8px;transform:scaleX(1.0000);transform-origin:0 0;">和室</div>
<div class="t" style="left:147.10px;top:402.26px;font-size:6.62px;color:#000;line-height:7px;transform:scaleX(0.8868);transform-origin:0 0;">CH2,300</div>
<div class="t" style="left:147.10px;top:408.66px;font-size:6.62px;color:#000;line-height:7px;transform:scaleX(0.8633);transform-origin:0 0;">11m²</div>
<div class="t" style="left:85.55px;top:252.76px;font-size:6.62px;color:#000;line-height:8px;transform:scaleX(0.8827);transform-origin:0 0;">6</div>
<div class="t" style="left:92.90px;top:249.66px;font-size:6.62px;color:#000;line-height:8px;transform:scaleX(1.0000);transform-origin:0 0;">リビングダイニ</div>
<div class="t" style="left:92.90px;top:255.36px;font-size:6.62px;color:#000;line-height:8px;transform:scaleX(1.0000);transform-origin:0 0;">ング</div>
<div class="t" style="left:147.10px;top:249.66px;font-size:6.62px;color:#000;line-height:7px;transform:scaleX(0.8868);transform-origin:0 0;">CH2,300</div>
<div class="t" style="left:147.10px;top:256.06px;font-size:6.62px;color:#000;line-height:7px;transform:scaleX(0.8633);transform-origin:0 0;">13m²</div>
<div class="t" style="left:82.30px;top:420.62px;font-size:6.62px;color:#000;line-height:8px;transform:scaleX(0.8827);transform-origin:0 0;">16</div>
<div class="t" style="left:92.90px;top:417.52px;font-size:6.62px;color:#000;line-height:8px;transform:scaleX(1.0000);transform-origin:0 0;">リビングダイニ</div>
<div class="t" style="left:92.90px;top:423.22px;font-size:6.62px;color:#000;line-height:8px;transform:scaleX(1.0000);transform-origin:0 0;">ング</div>
<div class="t" style="left:147.10px;top:417.52px;font-size:6.62px;color:#000;line-height:7px;transform:scaleX(0.8868);transform-origin:0 0;">CH2,300</div>
<div class="t" style="left:147.10px;top:423.92px;font-size:6.62px;color:#000;line-height:7px;transform:scaleX(0.8633);transform-origin:0 0;">13m²</div>
<div class="t" style="left:85.55px;top:268.02px;font-size:6.62px;color:#000;line-height:8px;transform:scaleX(0.8827);transform-origin:0 0;">7</div>
<div class="t" style="left:92.90px;top:267.82px;font-size:6.62px;color:#000;line-height:8px;transform:scaleX(1.0000);transform-origin:0 0;">キッチン</div>
<div class="t" style="left:147.10px;top:264.92px;font-size:6.62px;color:#000;line-height:7px;transform:scaleX(0.8868);transform-origin:0 0;">CH2,300</div>
<div class="t" style="left:147.10px;top:271.32px;font-size:6.62px;color:#000;line-height:7px;transform:scaleX(0.8517);transform-origin:0 0;">7m²</div>
<div class="t" style="left:82.30px;top:435.88px;font-size:6.62px;color:#000;line-height:8px;transform:scaleX(0.8827);transform-origin:0 0;">17</div>
<div class="t" style="left:92.90px;top:435.68px;font-size:6.62px;color:#000;line-height:8px;transform:scaleX(1.0000);transform-origin:0 0;">キッチン</div>
<div class="t" style="left:147.10px;top:432.78px;font-size:6.62px;color:#000;line-height:7px;transform:scaleX(0.8868);transform-origin:0 0;">CH2,300</div>
<div class="t" style="left:147.10px;top:439.18px;font-size:6.62px;color:#000;line-height:7px;transform:scaleX(0.8517);transform-origin:0 0;">7m²</div>
<div class="t" style="left:85.55px;top:283.28px;font-size:6.62px;color:#000;line-height:8px;transform:scaleX(0.8827);transform-origin:0 0;">8</div>
<div class="t" style="left:92.90px;top:283.08px;font-size:6.62px;color:#000;line-height:8px;transform:scaleX(1.0000);transform-origin:0 0;">トイレ</div>
<div class="t" style="left:147.10px;top:280.18px;font-size:6.62px;color:#000;line-height:7px;transform:scaleX(0.8868);transform-origin:0 0;">CH2,300</div>
<div class="t" style="left:147.10px;top:286.58px;font-size:6.62px;color:#000;line-height:7px;transform:scaleX(0.8517);transform-origin:0 0;">2m²</div>
<div class="t" style="left:82.30px;top:451.14px;font-size:6.62px;color:#000;line-height:8px;transform:scaleX(0.8827);transform-origin:0 0;">18</div>
<div class="t" style="left:92.90px;top:450.94px;font-size:6.62px;color:#000;line-height:8px;transform:scaleX(1.0000);transform-origin:0 0;">トイレ</div>
<div class="t" style="left:147.10px;top:448.04px;font-size:6.62px;color:#000;line-height:7px;transform:scaleX(0.8868);transform-origin:0 0;">CH2,300</div>
<div class="t" style="left:147.10px;top:454.44px;font-size:6.62px;color:#000;line-height:7px;transform:scaleX(0.8517);transform-origin:0 0;">2m²</div>
<div class="t" style="left:85.55px;top:298.54px;font-size:6.62px;color:#000;line-height:8px;transform:scaleX(0.8827);transform-origin:0 0;">9</div>
<div class="t" style="left:92.90px;top:298.34px;font-size:6.62px;color:#000;line-height:8px;transform:scaleX(1.0000);transform-origin:0 0;">洗面脱衣室</div>
<div class="t" style="left:147.10px;top:295.44px;font-size:6.62px;color:#000;line-height:7px;transform:scaleX(0.8868);transform-origin:0 0;">CH2,300</div>
<div class="t" style="left:147.10px;top:301.84px;font-size:6.62px;color:#000;line-height:7px;transform:scaleX(0.8517);transform-origin:0 0;">2m²</div>
<div class="t" style="left:82.30px;top:466.40px;font-size:6.62px;color:#000;line-height:8px;transform:scaleX(0.8827);transform-origin:0 0;">19</div>
<div class="t" style="left:92.90px;top:466.20px;font-size:6.62px;color:#000;line-height:8px;transform:scaleX(1.0000);transform-origin:0 0;">洗面脱衣室</div>
<div class="t" style="left:147.10px;top:463.30px;font-size:6.62px;color:#000;line-height:7px;transform:scaleX(0.8868);transform-origin:0 0;">CH2,300</div>
<div class="t" style="left:147.10px;top:469.70px;font-size:6.62px;color:#000;line-height:7px;transform:scaleX(0.8517);transform-origin:0 0;">2m²</div>
<div class="t" style="left:82.30px;top:313.80px;font-size:6.62px;color:#000;line-height:8px;transform:scaleX(0.8827);transform-origin:0 0;">10</div>
<div class="t" style="left:92.90px;top:313.60px;font-size:6.62px;color:#000;line-height:8px;transform:scaleX(1.0000);transform-origin:0 0;">ユニットバス</div>
<div class="t" style="left:147.10px;top:310.70px;font-size:6.62px;color:#000;line-height:7px;transform:scaleX(0.8868);transform-origin:0 0;">CH2,300</div>
<div class="t" style="left:147.10px;top:317.10px;font-size:6.62px;color:#000;line-height:7px;transform:scaleX(0.8517);transform-origin:0 0;">3m²</div>
<div class="t" style="left:82.30px;top:481.66px;font-size:6.62px;color:#000;line-height:8px;transform:scaleX(0.8827);transform-origin:0 0;">20</div>
<div class="t" style="left:92.90px;top:481.46px;font-size:6.62px;color:#000;line-height:8px;transform:scaleX(1.0000);transform-origin:0 0;">ユニットバス</div>
<div class="t" style="left:147.10px;top:478.56px;font-size:6.62px;color:#000;line-height:7px;transform:scaleX(0.8868);transform-origin:0 0;">CH2,300</div>
<div class="t" style="left:147.10px;top:484.96px;font-size:6.62px;color:#000;line-height:7px;transform:scaleX(0.8517);transform-origin:0 0;">3m²</div>
<div class="t" style="left:402.25px;top:181.16px;font-size:6.6px;color:#26261f;line-height:7px;transform:scaleX(1.0899);transform-origin:0 0;-webkit-text-stroke:0.25px currentColor;">0.2</div>
<div class="t" style="left:402.25px;top:349.02px;font-size:6.6px;color:#26261f;line-height:7px;transform:scaleX(1.0899);transform-origin:0 0;-webkit-text-stroke:0.25px currentColor;">0.2</div>
<div class="t" style="left:420.31px;top:181.16px;font-size:6.6px;color:#26261f;line-height:7px;transform:scaleX(1.0899);transform-origin:0 0;-webkit-text-stroke:0.25px currentColor;">0.8</div>
<div class="t" style="left:420.31px;top:349.02px;font-size:6.6px;color:#26261f;line-height:7px;transform:scaleX(1.0899);transform-origin:0 0;-webkit-text-stroke:0.25px currentColor;">0.8</div>
<div class="t" style="left:640.73px;top:181.16px;font-size:6.6px;color:#26261f;line-height:7px;transform:scaleX(0.7083);transform-origin:0 0;-webkit-text-stroke:0.25px currentColor;">1</div>
<div class="t" style="left:640.73px;top:349.02px;font-size:6.6px;color:#26261f;line-height:7px;transform:scaleX(0.7083);transform-origin:0 0;-webkit-text-stroke:0.25px currentColor;">1</div>
<div class="t" style="left:658.79px;top:196.42px;font-size:6.6px;color:#26261f;line-height:7px;transform:scaleX(0.7083);transform-origin:0 0;-webkit-text-stroke:0.25px currentColor;">1</div>
<div class="t" style="left:658.79px;top:364.28px;font-size:6.6px;color:#26261f;line-height:7px;transform:scaleX(0.7083);transform-origin:0 0;-webkit-text-stroke:0.25px currentColor;">1</div>
<div class="t" style="left:402.25px;top:211.68px;font-size:6.6px;color:#26261f;line-height:7px;transform:scaleX(1.0899);transform-origin:0 0;-webkit-text-stroke:0.25px currentColor;">0.5</div>
<div class="t" style="left:402.25px;top:379.54px;font-size:6.6px;color:#26261f;line-height:7px;transform:scaleX(1.0899);transform-origin:0 0;-webkit-text-stroke:0.25px currentColor;">0.5</div>
<div class="t" style="left:420.31px;top:211.68px;font-size:6.6px;color:#26261f;line-height:7px;transform:scaleX(1.0899);transform-origin:0 0;-webkit-text-stroke:0.25px currentColor;">0.5</div>
<div class="t" style="left:420.31px;top:379.54px;font-size:6.6px;color:#26261f;line-height:7px;transform:scaleX(1.0899);transform-origin:0 0;-webkit-text-stroke:0.25px currentColor;">0.5</div>
<div class="t" style="left:676.85px;top:211.68px;font-size:6.6px;color:#26261f;line-height:7px;transform:scaleX(0.7083);transform-origin:0 0;-webkit-text-stroke:0.25px currentColor;">1</div>
<div class="t" style="left:676.85px;top:379.54px;font-size:6.6px;color:#26261f;line-height:7px;transform:scaleX(0.7083);transform-origin:0 0;-webkit-text-stroke:0.25px currentColor;">1</div>
<div class="t" style="left:402.25px;top:226.94px;font-size:6.6px;color:#26261f;line-height:7px;transform:scaleX(1.0899);transform-origin:0 0;-webkit-text-stroke:0.25px currentColor;">0.5</div>
<div class="t" style="left:402.25px;top:394.80px;font-size:6.6px;color:#26261f;line-height:7px;transform:scaleX(1.0899);transform-origin:0 0;-webkit-text-stroke:0.25px currentColor;">0.5</div>
<div class="t" style="left:420.31px;top:226.94px;font-size:6.6px;color:#26261f;line-height:7px;transform:scaleX(1.0899);transform-origin:0 0;-webkit-text-stroke:0.25px currentColor;">0.5</div>
<div class="t" style="left:420.31px;top:394.80px;font-size:6.6px;color:#26261f;line-height:7px;transform:scaleX(1.0899);transform-origin:0 0;-webkit-text-stroke:0.25px currentColor;">0.5</div>
<div class="t" style="left:676.85px;top:226.94px;font-size:6.6px;color:#26261f;line-height:7px;transform:scaleX(0.7083);transform-origin:0 0;-webkit-text-stroke:0.25px currentColor;">1</div>
<div class="t" style="left:676.85px;top:394.80px;font-size:6.6px;color:#26261f;line-height:7px;transform:scaleX(0.7083);transform-origin:0 0;-webkit-text-stroke:0.25px currentColor;">1</div>
<div class="t" style="left:402.25px;top:242.20px;font-size:6.6px;color:#26261f;line-height:7px;transform:scaleX(1.0899);transform-origin:0 0;-webkit-text-stroke:0.25px currentColor;">0.4</div>
<div class="t" style="left:402.25px;top:410.06px;font-size:6.6px;color:#26261f;line-height:7px;transform:scaleX(1.0899);transform-origin:0 0;-webkit-text-stroke:0.25px currentColor;">0.4</div>
<div class="t" style="left:420.31px;top:242.20px;font-size:6.6px;color:#26261f;line-height:7px;transform:scaleX(1.0899);transform-origin:0 0;-webkit-text-stroke:0.25px currentColor;">0.8</div>
<div class="t" style="left:420.31px;top:410.06px;font-size:6.6px;color:#26261f;line-height:7px;transform:scaleX(1.0899);transform-origin:0 0;-webkit-text-stroke:0.25px currentColor;">0.8</div>
<div class="t" style="left:402.25px;top:257.46px;font-size:6.6px;color:#26261f;line-height:7px;transform:scaleX(1.0899);transform-origin:0 0;-webkit-text-stroke:0.25px currentColor;">0.4</div>
<div class="t" style="left:402.25px;top:425.32px;font-size:6.6px;color:#26261f;line-height:7px;transform:scaleX(1.0899);transform-origin:0 0;-webkit-text-stroke:0.25px currentColor;">0.4</div>
<div class="t" style="left:420.31px;top:257.46px;font-size:6.6px;color:#26261f;line-height:7px;transform:scaleX(1.0899);transform-origin:0 0;-webkit-text-stroke:0.25px currentColor;">0.8</div>
<div class="t" style="left:420.31px;top:425.32px;font-size:6.6px;color:#26261f;line-height:7px;transform:scaleX(1.0899);transform-origin:0 0;-webkit-text-stroke:0.25px currentColor;">0.8</div>
<div class="t" style="left:402.25px;top:272.72px;font-size:6.6px;color:#26261f;line-height:7px;transform:scaleX(1.0899);transform-origin:0 0;-webkit-text-stroke:0.25px currentColor;">0.3</div>
<div class="t" style="left:402.25px;top:440.58px;font-size:6.6px;color:#26261f;line-height:7px;transform:scaleX(1.0899);transform-origin:0 0;-webkit-text-stroke:0.25px currentColor;">0.3</div>
<div class="t" style="left:420.31px;top:272.72px;font-size:6.6px;color:#26261f;line-height:7px;transform:scaleX(1.0899);transform-origin:0 0;-webkit-text-stroke:0.25px currentColor;">0.4</div>
<div class="t" style="left:420.31px;top:440.58px;font-size:6.6px;color:#26261f;line-height:7px;transform:scaleX(1.0899);transform-origin:0 0;-webkit-text-stroke:0.25px currentColor;">0.4</div>
<div class="t" style="left:438.37px;top:272.72px;font-size:6.6px;color:#26261f;line-height:7px;transform:scaleX(1.0899);transform-origin:0 0;-webkit-text-stroke:0.25px currentColor;">0.7</div>
<div class="t" style="left:438.37px;top:440.58px;font-size:6.6px;color:#26261f;line-height:7px;transform:scaleX(1.0899);transform-origin:0 0;-webkit-text-stroke:0.25px currentColor;">0.7</div>
<div class="t" style="left:456.43px;top:272.72px;font-size:6.6px;color:#26261f;line-height:7px;transform:scaleX(1.0899);transform-origin:0 0;-webkit-text-stroke:0.25px currentColor;">0.3</div>
<div class="t" style="left:456.43px;top:440.58px;font-size:6.6px;color:#26261f;line-height:7px;transform:scaleX(1.0899);transform-origin:0 0;-webkit-text-stroke:0.25px currentColor;">0.3</div>
<div class="t" style="left:474.49px;top:272.72px;font-size:6.6px;color:#26261f;line-height:7px;transform:scaleX(1.0899);transform-origin:0 0;-webkit-text-stroke:0.25px currentColor;">0.3</div>
<div class="t" style="left:474.49px;top:440.58px;font-size:6.6px;color:#26261f;line-height:7px;transform:scaleX(1.0899);transform-origin:0 0;-webkit-text-stroke:0.25px currentColor;">0.3</div>
<div class="t" style="left:622.67px;top:303.24px;font-size:6.6px;color:#26261f;line-height:7px;transform:scaleX(0.7083);transform-origin:0 0;-webkit-text-stroke:0.25px currentColor;">1</div>
<div class="t" style="left:622.67px;top:471.10px;font-size:6.6px;color:#26261f;line-height:7px;transform:scaleX(0.7083);transform-origin:0 0;-webkit-text-stroke:0.25px currentColor;">1</div>
<svg style="position:absolute;left:0;top:0" width="707" height="534" viewBox="0 0 707 534" fill="none" stroke="#3e3e3a" stroke-width="0.8"><circle cx="353.37" cy="149.53" r="2.75"/><circle cx="425.61" cy="149.53" r="2.75"/><circle cx="443.67" cy="149.53" r="2.75"/><circle cx="552.03" cy="149.53" r="2.75"/><circle cx="570.09" cy="149.53" r="2.75"/><circle cx="588.15" cy="149.53" r="2.75"/><circle cx="263.07" cy="180.19" r="2.75"/><circle cx="263.07" cy="348.05" r="2.75"/><circle cx="281.13" cy="180.19" r="2.75"/><circle cx="281.13" cy="348.05" r="2.75"/><circle cx="389.49" cy="180.19" r="2.75"/><circle cx="389.49" cy="348.05" r="2.75"/><circle cx="409.35" cy="177.36" r="2.75"/><circle cx="409.35" cy="345.22" r="2.75"/><circle cx="427.41" cy="177.36" r="2.75"/><circle cx="427.41" cy="345.22" r="2.75"/><circle cx="644.13" cy="177.36" r="2.75"/><circle cx="644.13" cy="345.22" r="2.75"/><circle cx="443.67" cy="180.19" r="2.75"/><circle cx="443.67" cy="348.05" r="2.75"/><circle cx="497.85" cy="180.19" r="2.75"/><circle cx="497.85" cy="348.05" r="2.75"/><circle cx="515.91" cy="180.19" r="2.75"/><circle cx="515.91" cy="348.05" r="2.75"/><circle cx="533.97" cy="180.19" r="2.75"/><circle cx="533.97" cy="348.05" r="2.75"/><circle cx="208.89" cy="195.45" r="2.75"/><circle cx="208.89" cy="363.31" r="2.75"/><circle cx="299.19" cy="195.45" r="2.75"/><circle cx="299.19" cy="363.31" r="2.75"/><circle cx="389.49" cy="195.45" r="2.75"/><circle cx="389.49" cy="363.31" r="2.75"/><circle cx="425.61" cy="195.45" r="2.75"/><circle cx="425.61" cy="363.31" r="2.75"/><circle cx="662.19" cy="192.62" r="2.75"/><circle cx="662.19" cy="360.48" r="2.75"/><circle cx="443.67" cy="195.45" r="2.75"/><circle cx="443.67" cy="363.31" r="2.75"/><circle cx="497.85" cy="195.45" r="2.75"/><circle cx="497.85" cy="363.31" r="2.75"/><circle cx="515.91" cy="195.45" r="2.75"/><circle cx="515.91" cy="363.31" r="2.75"/><circle cx="533.97" cy="195.45" r="2.75"/><circle cx="533.97" cy="363.31" r="2.75"/><circle cx="208.89" cy="210.71" r="2.75"/><circle cx="208.89" cy="378.57" r="2.75"/><circle cx="299.19" cy="210.71" r="2.75"/><circle cx="299.19" cy="378.57" r="2.75"/><circle cx="389.49" cy="210.71" r="2.75"/><circle cx="389.49" cy="378.57" r="2.75"/><circle cx="409.35" cy="207.88" r="2.75"/><circle cx="409.35" cy="375.74" r="2.75"/><circle cx="427.41" cy="207.88" r="2.75"/><circle cx="427.41" cy="375.74" r="2.75"/><circle cx="680.25" cy="207.88" r="2.75"/><circle cx="680.25" cy="375.74" r="2.75"/><circle cx="443.67" cy="210.71" r="2.75"/><circle cx="443.67" cy="378.57" r="2.75"/><circle cx="497.85" cy="210.71" r="2.75"/><circle cx="497.85" cy="378.57" r="2.75"/><circle cx="515.91" cy="210.71" r="2.75"/><circle cx="515.91" cy="378.57" r="2.75"/><circle cx="533.97" cy="210.71" r="2.75"/><circle cx="533.97" cy="378.57" r="2.75"/><circle cx="208.89" cy="225.97" r="2.75"/><circle cx="208.89" cy="393.83" r="2.75"/><circle cx="299.19" cy="225.97" r="2.75"/><circle cx="299.19" cy="393.83" r="2.75"/><circle cx="389.49" cy="225.97" r="2.75"/><circle cx="389.49" cy="393.83" r="2.75"/><circle cx="409.35" cy="223.14" r="2.75"/><circle cx="409.35" cy="391.00" r="2.75"/><circle cx="427.41" cy="223.14" r="2.75"/><circle cx="427.41" cy="391.00" r="2.75"/><circle cx="680.25" cy="223.14" r="2.75"/><circle cx="680.25" cy="391.00" r="2.75"/><circle cx="443.67" cy="225.97" r="2.75"/><circle cx="443.67" cy="393.83" r="2.75"/><circle cx="497.85" cy="225.97" r="2.75"/><circle cx="497.85" cy="393.83" r="2.75"/><circle cx="515.91" cy="225.97" r="2.75"/><circle cx="515.91" cy="393.83" r="2.75"/><circle cx="533.97" cy="225.97" r="2.75"/><circle cx="533.97" cy="393.83" r="2.75"/><circle cx="317.25" cy="241.23" r="2.75"/><circle cx="317.25" cy="409.09" r="2.75"/><circle cx="335.31" cy="241.23" r="2.75"/><circle cx="335.31" cy="409.09" r="2.75"/><circle cx="371.43" cy="241.23" r="2.75"/><circle cx="371.43" cy="409.09" r="2.75"/><circle cx="409.35" cy="238.40" r="2.75"/><circle cx="409.35" cy="406.26" r="2.75"/><circle cx="427.41" cy="238.40" r="2.75"/><circle cx="427.41" cy="406.26" r="2.75"/><circle cx="606.21" cy="241.23" r="2.75"/><circle cx="606.21" cy="409.09" r="2.75"/><circle cx="443.67" cy="241.23" r="2.75"/><circle cx="443.67" cy="409.09" r="2.75"/><circle cx="497.85" cy="241.23" r="2.75"/><circle cx="497.85" cy="409.09" r="2.75"/><circle cx="515.91" cy="241.23" r="2.75"/><circle cx="515.91" cy="409.09" r="2.75"/><circle cx="533.97" cy="241.23" r="2.75"/><circle cx="533.97" cy="409.09" r="2.75"/><circle cx="208.89" cy="256.49" r="2.75"/><circle cx="208.89" cy="424.35" r="2.75"/><circle cx="299.19" cy="256.49" r="2.75"/><circle cx="299.19" cy="424.35" r="2.75"/><circle cx="389.49" cy="256.49" r="2.75"/><circle cx="389.49" cy="424.35" r="2.75"/><circle cx="409.35" cy="253.66" r="2.75"/><circle cx="409.35" cy="421.52" r="2.75"/><circle cx="427.41" cy="253.66" r="2.75"/><circle cx="427.41" cy="421.52" r="2.75"/><circle cx="443.67" cy="256.49" r="2.75"/><circle cx="443.67" cy="424.35" r="2.75"/><circle cx="497.85" cy="256.49" r="2.75"/><circle cx="497.85" cy="424.35" r="2.75"/><circle cx="515.91" cy="256.49" r="2.75"/><circle cx="515.91" cy="424.35" r="2.75"/><circle cx="533.97" cy="256.49" r="2.75"/><circle cx="533.97" cy="424.35" r="2.75"/><circle cx="208.89" cy="271.75" r="2.75"/><circle cx="208.89" cy="439.61" r="2.75"/><circle cx="299.19" cy="271.75" r="2.75"/><circle cx="299.19" cy="439.61" r="2.75"/><circle cx="389.49" cy="271.75" r="2.75"/><circle cx="389.49" cy="439.61" r="2.75"/><circle cx="409.35" cy="268.92" r="2.75"/><circle cx="409.35" cy="436.78" r="2.75"/><circle cx="427.41" cy="268.92" r="2.75"/><circle cx="427.41" cy="436.78" r="2.75"/><circle cx="445.47" cy="268.92" r="2.75"/><circle cx="445.47" cy="436.78" r="2.75"/><circle cx="463.53" cy="268.92" r="2.75"/><circle cx="463.53" cy="436.78" r="2.75"/><circle cx="481.59" cy="268.92" r="2.75"/><circle cx="481.59" cy="436.78" r="2.75"/><circle cx="497.85" cy="271.75" r="2.75"/><circle cx="497.85" cy="439.61" r="2.75"/><circle cx="515.91" cy="271.75" r="2.75"/><circle cx="515.91" cy="439.61" r="2.75"/><circle cx="533.97" cy="271.75" r="2.75"/><circle cx="533.97" cy="439.61" r="2.75"/><circle cx="190.83" cy="287.01" r="2.75"/><circle cx="190.83" cy="454.87" r="2.75"/><circle cx="299.19" cy="287.01" r="2.75"/><circle cx="299.19" cy="454.87" r="2.75"/><circle cx="389.49" cy="287.01" r="2.75"/><circle cx="389.49" cy="454.87" r="2.75"/><circle cx="425.61" cy="287.01" r="2.75"/><circle cx="425.61" cy="454.87" r="2.75"/><circle cx="443.67" cy="287.01" r="2.75"/><circle cx="443.67" cy="454.87" r="2.75"/><circle cx="497.85" cy="287.01" r="2.75"/><circle cx="497.85" cy="454.87" r="2.75"/><circle cx="515.91" cy="287.01" r="2.75"/><circle cx="515.91" cy="454.87" r="2.75"/><circle cx="533.97" cy="287.01" r="2.75"/><circle cx="533.97" cy="454.87" r="2.75"/><circle cx="190.83" cy="302.27" r="2.75"/><circle cx="190.83" cy="470.13" r="2.75"/><circle cx="299.19" cy="302.27" r="2.75"/><circle cx="299.19" cy="470.13" r="2.75"/><circle cx="389.49" cy="302.27" r="2.75"/><circle cx="389.49" cy="470.13" r="2.75"/><circle cx="425.61" cy="302.27" r="2.75"/><circle cx="425.61" cy="470.13" r="2.75"/><circle cx="626.07" cy="299.44" r="2.75"/><circle cx="626.07" cy="467.30" r="2.75"/><circle cx="443.67" cy="302.27" r="2.75"/><circle cx="443.67" cy="470.13" r="2.75"/><circle cx="497.85" cy="302.27" r="2.75"/><circle cx="497.85" cy="470.13" r="2.75"/><circle cx="515.91" cy="302.27" r="2.75"/><circle cx="515.91" cy="470.13" r="2.75"/><circle cx="533.97" cy="302.27" r="2.75"/><circle cx="533.97" cy="470.13" r="2.75"/></svg>
<div style="left:684.50px;top:54.00px;width:9.00px;height:438.80px;background:#f4f4ee;"></div>
<div style="left:684.50px;top:54.00px;width:9.00px;height:9.20px;background:#c3d1f8;border-radius:1px;"><svg style="position:absolute;left:0;top:0" width="9" height="9.2" viewBox="0 0 9 9.2"><path d="M2.3 5.6 L4.5 3.3 L6.7 5.6" stroke="#4a5fa8" stroke-width="1.3" fill="none"/></svg></div>
<div style="left:684.80px;top:63.40px;width:8.40px;height:213.40px;background:#c3d1f8;border-radius:1px;"></div>
<div style="left:684.50px;top:483.60px;width:9.00px;height:9.20px;background:#c3d1f8;border-radius:1px;"><svg style="position:absolute;left:0;top:0" width="9" height="9.2" viewBox="0 0 9 9.2"><path d="M2.3 3.6 L4.5 5.9 L6.7 3.6" stroke="#4a5fa8" stroke-width="1.3" fill="none"/></svg></div>
<div style="left:63.50px;top:492.80px;width:630.00px;height:10.00px;background:#f4f4ee;"></div>
<div style="left:63.70px;top:492.80px;width:9.00px;height:10.00px;background:#c3d1f8;border-radius:1px;"><svg style="position:absolute;left:0;top:0" width="9" height="10" viewBox="0 0 9 10"><path d="M5.4 2.8 L3.2 5 L5.4 7.2" stroke="#4a5fa8" stroke-width="1.3" fill="none"/></svg></div>
<div style="left:74.40px;top:493.10px;width:449.00px;height:9.40px;background:#c3d1f8;border-radius:1px;"></div>
<div style="left:675.60px;top:492.80px;width:9.00px;height:10.00px;background:#c3d1f8;border-radius:1px;"><svg style="position:absolute;left:0;top:0" width="9" height="10" viewBox="0 0 9 10"><path d="M3.6 2.8 L5.8 5 L3.6 7.2" stroke="#4a5fa8" stroke-width="1.3" fill="none"/></svg></div>
<div style="left:684.50px;top:492.80px;width:9.00px;height:10.00px;background:#ece9d8;"></div>
<div style="left:10.30px;top:65.20px;width:80.30px;height:74.40px;background:#fff;box-shadow:inset 0 0 0 0.8px #a6a392, 1.6px 1.6px 1.6px rgba(0,0,0,.42);"></div>
<div style="left:0;top:0;width:0;height:0"><div class="t" style="left:19.90px;top:66.90px;font-size:6.62px;color:#000;line-height:8px;transform:scaleX(0.7736);transform-origin:0 0;">1.ユニットバス</div></div>
<div style="left:84.60px;top:68.40px;width:0.00px;height:0.00px;border-top:2.4px solid transparent;border-bottom:2.4px solid transparent;border-left:2.8px solid #000;"></div>
<div style="left:0;top:0;width:0;height:0"><div class="t" style="left:19.90px;top:75.85px;font-size:6.62px;color:#000;line-height:8px;transform:scaleX(0.9736);transform-origin:0 0;">2.洗面化粧台</div></div>
<div style="left:84.60px;top:77.35px;width:0.00px;height:0.00px;border-top:2.4px solid transparent;border-bottom:2.4px solid transparent;border-left:2.8px solid #000;"></div>
<div style="left:0;top:0;width:0;height:0"><div class="t" style="left:19.90px;top:84.80px;font-size:6.62px;color:#000;line-height:8px;transform:scaleX(0.7900);transform-origin:0 0;">3.システムキッチン</div></div>
<div style="left:84.60px;top:86.30px;width:0.00px;height:0.00px;border-top:2.4px solid transparent;border-bottom:2.4px solid transparent;border-left:2.8px solid #000;"></div>
<div style="left:11.80px;top:93.05px;width:77.30px;height:9.15px;background:#3163c6;"></div>
<div style="left:0;top:0;width:0;height:0"><div class="t" style="left:19.90px;top:93.75px;font-size:6.62px;color:#fff;line-height:8px;transform:scaleX(0.9750);transform-origin:0 0;">4.収納家具</div></div>
<div style="left:84.60px;top:95.25px;width:0.00px;height:0.00px;border-top:2.4px solid transparent;border-bottom:2.4px solid transparent;border-left:2.8px solid #fff;"></div>
<div style="left:0;top:0;width:0;height:0"><div class="t" style="left:19.90px;top:102.70px;font-size:6.62px;color:#000;line-height:8px;transform:scaleX(0.7975);transform-origin:0 0;">5.押入れ・クローゼット</div></div>
<div style="left:84.60px;top:104.20px;width:0.00px;height:0.00px;border-top:2.4px solid transparent;border-bottom:2.4px solid transparent;border-left:2.8px solid #000;"></div>
<div style="left:0;top:0;width:0;height:0"><div class="t" style="left:19.90px;top:111.65px;font-size:6.62px;color:#000;line-height:8px;transform:scaleX(0.8242);transform-origin:0 0;">6.間仕切りユニット</div></div>
<div style="left:84.60px;top:113.15px;width:0.00px;height:0.00px;border-top:2.4px solid transparent;border-bottom:2.4px solid transparent;border-left:2.8px solid #000;"></div>
<div style="left:0;top:0;width:0;height:0"><div class="t" style="left:19.90px;top:120.60px;font-size:6.62px;color:#000;line-height:8px;transform:scaleX(0.8707);transform-origin:0 0;">7.その他</div></div>
<div style="left:84.60px;top:122.10px;width:0.00px;height:0.00px;border-top:2.4px solid transparent;border-bottom:2.4px solid transparent;border-left:2.8px solid #000;"></div>
<div style="left:0;top:0;width:0;height:0"><div class="t" style="left:19.90px;top:129.55px;font-size:6.62px;color:#000;line-height:8px;transform:scaleX(0.7976);transform-origin:0 0;">キャンセル</div></div>
<div style="left:87.80px;top:92.20px;width:76.40px;height:65.85px;background:#fff;box-shadow:inset 0 0 0 0.8px #a6a392, 1.6px 1.6px 1.6px rgba(0,0,0,.42);"></div>
<div style="left:0;top:0;width:0;height:0"><div class="t" style="left:97.60px;top:93.90px;font-size:6.62px;color:#000;line-height:8px;transform:scaleX(1.0121);transform-origin:0 0;">下駄箱</div></div>
<div style="left:158.20px;top:95.40px;width:0.00px;height:0.00px;border-top:2.4px solid transparent;border-bottom:2.4px solid transparent;border-left:2.8px solid #000;"></div>
<div style="left:0;top:0;width:0;height:0"><div class="t" style="left:97.60px;top:102.85px;font-size:6.62px;color:#000;line-height:8px;transform:scaleX(1.0177);transform-origin:0 0;">下駄箱付玄関収納</div></div>
<div style="left:158.20px;top:104.35px;width:0.00px;height:0.00px;border-top:2.4px solid transparent;border-bottom:2.4px solid transparent;border-left:2.8px solid #000;"></div>
<div style="left:0;top:0;width:0;height:0"><div class="t" style="left:97.60px;top:111.80px;font-size:6.62px;color:#000;line-height:8px;transform:scaleX(0.8325);transform-origin:0 0;">物入れ・コート入れ</div></div>
<div style="left:158.20px;top:113.30px;width:0.00px;height:0.00px;border-top:2.4px solid transparent;border-bottom:2.4px solid transparent;border-left:2.8px solid #000;"></div>
<div style="left:0;top:0;width:0;height:0"><div class="t" style="left:97.60px;top:120.75px;font-size:6.62px;color:#000;line-height:8px;transform:scaleX(0.9932);transform-origin:0 0;">収納戸棚</div></div>
<div style="left:158.20px;top:122.25px;width:0.00px;height:0.00px;border-top:2.4px solid transparent;border-bottom:2.4px solid transparent;border-left:2.8px solid #000;"></div>
<div style="left:89.30px;top:129.00px;width:73.40px;height:9.15px;background:#3163c6;"></div>
<div style="left:0;top:0;width:0;height:0"><div class="t" style="left:97.60px;top:129.70px;font-size:6.62px;color:#fff;line-height:8px;transform:scaleX(0.9479);transform-origin:0 0;">吊り戸棚</div></div>
<div style="left:158.20px;top:131.20px;width:0.00px;height:0.00px;border-top:2.4px solid transparent;border-bottom:2.4px solid transparent;border-left:2.8px solid #fff;"></div>
<div style="left:0;top:0;width:0;height:0"><div class="t" style="left:97.60px;top:138.65px;font-size:6.62px;color:#000;line-height:8px;transform:scaleX(0.9869);transform-origin:0 0;">電話台</div></div>
<div style="left:158.20px;top:140.15px;width:0.00px;height:0.00px;border-top:2.4px solid transparent;border-bottom:2.4px solid transparent;border-left:2.8px solid #000;"></div>
<div style="left:0;top:0;width:0;height:0"><div class="t" style="left:97.60px;top:147.60px;font-size:6.62px;color:#000;line-height:8px;transform:scaleX(0.9456);transform-origin:0 0;">トイレ棚板</div></div>
<div style="left:158.20px;top:149.10px;width:0.00px;height:0.00px;border-top:2.4px solid transparent;border-bottom:2.4px solid transparent;border-left:2.8px solid #000;"></div>
<div style="left:162.20px;top:128.70px;width:177.40px;height:55.00px;background:#fff;box-shadow:inset 0 0 0 0.8px #a6a392, 1.6px 1.6px 1.6px rgba(0,0,0,.42);"></div>
<div style="left:0;top:0;width:0;height:0"><div class="t" style="left:170.70px;top:130.40px;font-size:6.62px;color:#000;line-height:8px;transform:scaleX(0.8384);transform-origin:0 0;">ポリエステル合板</div> <div class="t" style="left:219.70px;top:130.40px;font-size:6.62px;color:#000;line-height:8px;transform:scaleX(1.1311);transform-origin:0 0;">W600<span class="x">×</span>H450</div> <div class="t" style="left:270.70px;top:130.40px;font-size:6.62px;color:#000;line-height:8px;transform:scaleX(0.8514);transform-origin:0 0;">@25,000/か所</div> <div class="t" style="left:311.00px;top:130.40px;font-size:6.62px;color:#000;line-height:8px;transform:scaleX(0.8664);transform-origin:0 0;">(00)</div></div>
<div style="left:0;top:0;width:0;height:0"><div class="t" style="left:170.70px;top:139.35px;font-size:6.62px;color:#000;line-height:8px;transform:scaleX(0.8384);transform-origin:0 0;">ポリエステル合板</div> <div class="t" style="left:219.70px;top:139.35px;font-size:6.62px;color:#000;line-height:8px;transform:scaleX(1.1311);transform-origin:0 0;">W900<span class="x">×</span>H450</div> <div class="t" style="left:270.70px;top:139.35px;font-size:6.62px;color:#000;line-height:8px;transform:scaleX(0.8514);transform-origin:0 0;">@34,900/か所</div> <div class="t" style="left:311.00px;top:139.35px;font-size:6.62px;color:#000;line-height:8px;transform:scaleX(0.8664);transform-origin:0 0;">(00)</div></div>
<div style="left:163.70px;top:147.60px;width:174.40px;height:9.15px;background:#3163c6;"></div>
<div style="left:0;top:0;width:0;height:0"><div class="t" style="left:170.70px;top:148.30px;font-size:6.62px;color:#fff;line-height:8px;transform:scaleX(0.8384);transform-origin:0 0;">ポリエステル合板</div> <div class="t" style="left:219.70px;top:148.30px;font-size:6.62px;color:#fff;line-height:8px;transform:scaleX(1.1767);transform-origin:0 0;">W1200<span class="x">×</span>H450</div> <div class="t" style="left:275.60px;top:148.30px;font-size:6.62px;color:#fff;line-height:8px;transform:scaleX(0.8609);transform-origin:0 0;">@44,000/か所</div> <div class="t" style="left:316.70px;top:148.30px;font-size:6.62px;color:#fff;line-height:8px;transform:scaleX(0.8919);transform-origin:0 0;">(00)</div></div>
<div style="left:0;top:0;width:0;height:0"><div class="t" style="left:170.70px;top:157.25px;font-size:6.62px;color:#000;line-height:8px;transform:scaleX(1.0000);transform-origin:0 0;">練付け合板</div> <div class="t" style="left:209.70px;top:157.25px;font-size:6.62px;color:#000;line-height:8px;transform:scaleX(1.1311);transform-origin:0 0;">W600<span class="x">×</span>H450</div> <div class="t" style="left:259.40px;top:157.25px;font-size:6.62px;color:#000;line-height:8px;transform:scaleX(0.8514);transform-origin:0 0;">@34,100/か所</div> <div class="t" style="left:300.30px;top:157.25px;font-size:6.62px;color:#000;line-height:8px;transform:scaleX(0.8664);transform-origin:0 0;">(00)</div></div>
<div style="left:0;top:0;width:0;height:0"><div class="t" style="left:170.70px;top:166.20px;font-size:6.62px;color:#000;line-height:8px;transform:scaleX(1.0000);transform-origin:0 0;">練付け合板</div> <div class="t" style="left:209.70px;top:166.20px;font-size:6.62px;color:#000;line-height:8px;transform:scaleX(1.1311);transform-origin:0 0;">W900<span class="x">×</span>H450</div> <div class="t" style="left:259.40px;top:166.20px;font-size:6.62px;color:#000;line-height:8px;transform:scaleX(0.8514);transform-origin:0 0;">@46,200/か所</div> <div class="t" style="left:300.30px;top:166.20px;font-size:6.62px;color:#000;line-height:8px;transform:scaleX(0.8664);transform-origin:0 0;">(00)</div></div>
<div style="left:0;top:0;width:0;height:0"><div class="t" style="left:170.70px;top:175.15px;font-size:6.62px;color:#000;line-height:8px;transform:scaleX(1.0000);transform-origin:0 0;">練付け合板</div> <div class="t" style="left:209.70px;top:175.15px;font-size:6.62px;color:#000;line-height:8px;transform:scaleX(1.1602);transform-origin:0 0;">W1200<span class="x">×</span>H450</div> <div class="t" style="left:264.80px;top:175.15px;font-size:6.62px;color:#000;line-height:8px;transform:scaleX(0.8609);transform-origin:0 0;">@58,400/か所</div> <div class="t" style="left:306.00px;top:175.15px;font-size:6.62px;color:#000;line-height:8px;transform:scaleX(0.8409);transform-origin:0 0;">(00)</div></div>
</div>
</body>
</html>
